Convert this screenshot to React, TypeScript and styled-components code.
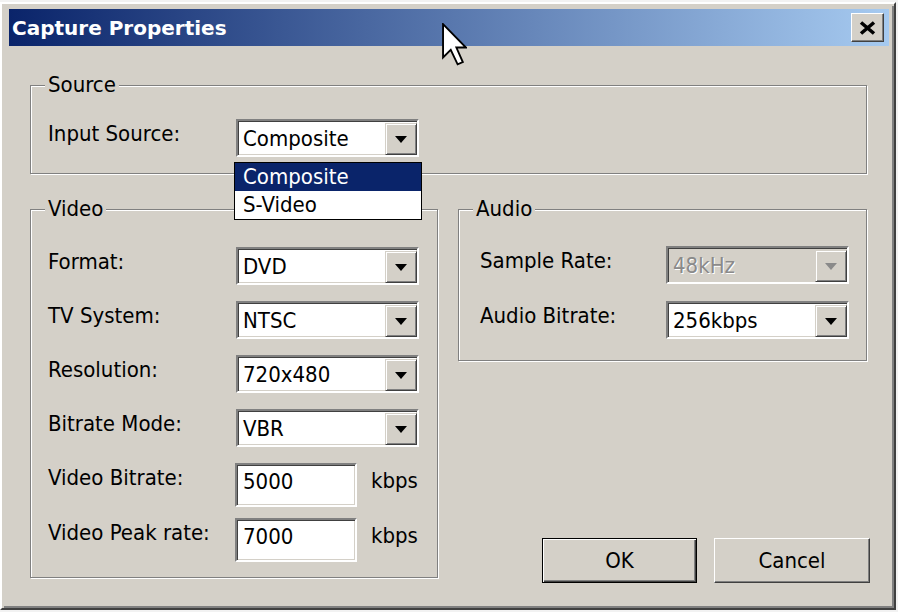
import styled, { createGlobalStyle } from "styled-components";

const GlobalStyle = createGlobalStyle`
  html, body {
    margin: 0;
    padding: 0;
    background: #f2f2f2;
  }
  body {
    font-family: "DejaVu Sans Condensed", "DejaVu Sans", "Liberation Sans", sans-serif;
    font-stretch: condensed;
    font-size: 22px;
    color: #000;
  }
`;

const Window = styled.div`
  position: relative;
  box-sizing: border-box;
  width: 896px;
  height: 608px;
  margin-top: 2px;
  padding: 5px 5px 0 7px;
  display: flex;
  flex-direction: column;
  background: #d4d0c8;
  border: 2px solid;
  border-color: #fff #404040 #404040 #fff;
  box-shadow: inset 2px 2px 0 #d4d0c8, inset -2px -2px 0 #808080;
`;

const TitleBar = styled.div`
  display: flex;
  align-items: center;
  height: 37px;
  padding-left: 3px;
  background: linear-gradient(to right, #0a246a, #a6caf0);
`;

const Title = styled.span`
  font-family: "DejaVu Sans", Verdana, sans-serif;
  font-stretch: normal;
  font-weight: bold;
  font-size: 20px;
  color: #fff;
`;

const CloseButton = styled.button`
  display: flex;
  align-items: center;
  justify-content: center;
  width: 33px;
  height: 29px;
  margin: 0 5px 0 auto;
  padding: 0;
  background: #d4d0c8;
  border: 1px solid;
  border-color: #fff #404040 #404040 #fff;
  box-shadow: inset -1px -1px 0 #808080;
`;

const Body = styled.div`
  flex: 1;
  display: flex;
  flex-direction: column;
  padding: 26px 22px 0 21px;
`;

const GroupBox = styled.fieldset<{ $w?: number }>`
  margin: 0;
  padding: 0;
  min-inline-size: 0;
  width: ${(p) => (p.$w ? `${p.$w}px` : "auto")};
  box-sizing: border-box;
  border: 1px solid #808080;
  box-shadow: inset 1px 1px 0 #fff, 1px 1px 0 #fff;
`;

const Caption = styled.legend`
  margin-left: 14px;
  padding: 0 3px;
  line-height: 26px;
  background: #d4d0c8;
`;

const GroupContent = styled.div<{ $pad: string }>`
  display: flex;
  flex-direction: column;
  padding: ${(p) => p.$pad};
`;

const Row = styled.div<{ $h: number }>`
  display: flex;
  align-items: flex-start;
  height: ${(p) => p.$h}px;
`;

const Label = styled.div<{ $w: number }>`
  width: ${(p) => p.$w}px;
  flex: none;
  padding-top: 2px;
  line-height: 26px;
  white-space: nowrap;
`;

const Sunken = styled.div`
  box-sizing: border-box;
  border: 2px solid;
  border-color: #808080 #fff #fff #808080;
  box-shadow: inset 1px 1px 0 #404040, inset -1px -1px 0 #d4d0c8;
`;

const Combo = styled(Sunken)<{ $disabled?: boolean }>`
  position: relative;
  display: flex;
  width: 183px;
  height: 38px;
  background: ${(p) => (p.$disabled ? "#d4d0c8" : "#fff")};
  color: ${(p) => (p.$disabled ? "#8a8a8a" : "#000")};
  text-shadow: ${(p) => (p.$disabled ? "1px 1px 0 #fff" : "none")};
`;

const ComboText = styled.div`
  flex: 1;
  padding: 5px 0 0 5px;
  line-height: 26px;
  white-space: nowrap;
`;

const ArrowButton = styled.div`
  box-sizing: border-box;
  display: flex;
  align-items: center;
  justify-content: center;
  width: 32px;
  margin-top: 2px;
  background: #d4d0c8;
  border: 1px solid;
  border-color: #d4d0c8 #404040 #404040 #d4d0c8;
  box-shadow: inset 1px 1px 0 #fff, inset -1px -1px 0 #808080;
`;

const Triangle = styled.span<{ $disabled?: boolean }>`
  width: 0;
  height: 0;
  border-left: 6px solid transparent;
  border-right: 6px solid transparent;
  border-top: 7px solid ${(p) => (p.$disabled ? "#8a8a8a" : "#000")};
`;

const DropList = styled.ul`
  position: absolute;
  top: 41px;
  left: -4px;
  z-index: 2;
  box-sizing: border-box;
  width: 188px;
  margin: 0;
  padding: 0;
  list-style: none;
  background: #fff;
  border: 1px solid #000;
  color: #000;
`;

const DropItem = styled.li<{ $selected?: boolean }>`
  height: 28px;
  padding-left: 8px;
  line-height: 28px;
  background: ${(p) => (p.$selected ? "#0a246a" : "#fff")};
  color: ${(p) => (p.$selected ? "#fff" : "#000")};
`;

const TextField = styled(Sunken)`
  width: 122px;
  height: 44px;
  padding: 4px 0 0 6px;
  line-height: 26px;
  background: #fff;
`;

const Unit = styled.span`
  margin-left: 14px;
  padding-top: 5px;
  line-height: 26px;
`;

const Columns = styled.div`
  display: flex;
  margin-top: 22px;
`;

const SideColumn = styled.div`
  flex: 1;
  display: flex;
  flex-direction: column;
  justify-content: space-between;
  margin-left: 20px;
`;

const ButtonRow = styled.div`
  display: flex;
  justify-content: flex-end;
  gap: 17px;
  margin: 0 -3px -5px 0;
`;

const PushButton = styled.button<{ $default?: boolean; $w: number }>`
  box-sizing: border-box;
  width: ${(p) => p.$w}px;
  height: 45px;
  padding: 0;
  font-family: inherit;
  font-stretch: condensed;
  font-size: 22px;
  color: #000;
  background: #d4d0c8;
  border: 1px solid;
  border-color: ${(p) => (p.$default ? "#000" : "#fff #404040 #404040 #fff")};
  box-shadow: ${(p) =>
    p.$default
      ? "inset 1px 1px 0 #fff, inset -1px -1px 0 #404040, inset -2px -2px 0 #808080"
      : "inset -1px -1px 0 #808080"};
`;

const Cursor = styled.svg`
  position: absolute;
  left: 440px;
  top: 19px;
`;

const videoCombos = [
  { label: "Format:", value: "DVD" },
  { label: "TV System:", value: "NTSC" },
  { label: "Resolution:", value: "720x480" },
  { label: "Bitrate Mode:", value: "VBR" },
];

const videoRates = [
  { label: "Video Bitrate:", value: "5000", h: 55 },
  { label: "Video Peak rate:", value: "7000", h: 45 },
];

const ComboBox = ({
  value,
  disabled,
  children,
}: {
  value: string;
  disabled?: boolean;
  children?: React.ReactNode;
}) => (
  <Combo $disabled={disabled}>
    <ComboText>{value}</ComboText>
    <ArrowButton>
      <Triangle $disabled={disabled} />
    </ArrowButton>
    {children}
  </Combo>
);

const App = () => {
  return (
    <>
      <GlobalStyle />
      <Window>
        <TitleBar>
          <Title>Capture Properties</Title>
          <CloseButton aria-label="Close">
            <svg width="17" height="14" viewBox="0 0 17 14">
              <path d="M2 1.5 L15 12.5 M15 1.5 L2 12.5" stroke="#000" strokeWidth="3.6" />
            </svg>
          </CloseButton>
        </TitleBar>

        <Body>
          <GroupBox>
            <Caption>Source</Caption>
            <GroupContent $pad="21px 0 16px 17px">
              <Row $h={38}>
                <Label $w={188}>Input Source:</Label>
                <ComboBox value="Composite">
                  <DropList>
                    <DropItem $selected>Composite</DropItem>
                    <DropItem>S-Video</DropItem>
                  </DropList>
                </ComboBox>
              </Row>
            </GroupContent>
          </GroupBox>

          <Columns>
            <GroupBox $w={408}>
              <Caption>Video</Caption>
              <GroupContent $pad="25px 0 14px 17px">
                {videoCombos.map((row) => (
                  <Row key={row.label} $h={54}>
                    <Label $w={188}>{row.label}</Label>
                    <ComboBox value={row.value} />
                  </Row>
                ))}
                {videoRates.map((row) => (
                  <Row key={row.label} $h={row.h}>
                    <Label $w={187}>{row.label}</Label>
                    <TextField>{row.value}</TextField>
                    <Unit>kbps</Unit>
                  </Row>
                ))}
              </GroupContent>
            </GroupBox>

            <SideColumn>
              <GroupBox>
                <Caption>Audio</Caption>
                <GroupContent $pad="24px 0 21px 21px">
                  <Row $h={55}>
                    <Label $w={186}>Sample Rate:</Label>
                    <ComboBox value="48kHz" disabled />
                  </Row>
                  <Row $h={38}>
                    <Label $w={186}>Audio Bitrate:</Label>
                    <ComboBox value="256kbps" />
                  </Row>
                </GroupContent>
              </GroupBox>

              <ButtonRow>
                <PushButton $default $w={155}>
                  OK
                </PushButton>
                <PushButton $w={156}>Cancel</PushButton>
              </ButtonRow>
            </SideColumn>
          </Columns>
        </Body>

        <Cursor width="25" height="43" viewBox="0 0 12 20.5">
          <path
            d="M0.5 0.5 L0.5 16.5 L4.2 12.8 L7.5 19.8 L10 18.7 L6.9 11.7 L11.5 11.7 Z"
            fill="#fff"
            stroke="#000"
            strokeWidth="0.9"
            strokeLinejoin="miter"
          />
        </Cursor>
      </Window>
    </>
  );
};

export default App;
